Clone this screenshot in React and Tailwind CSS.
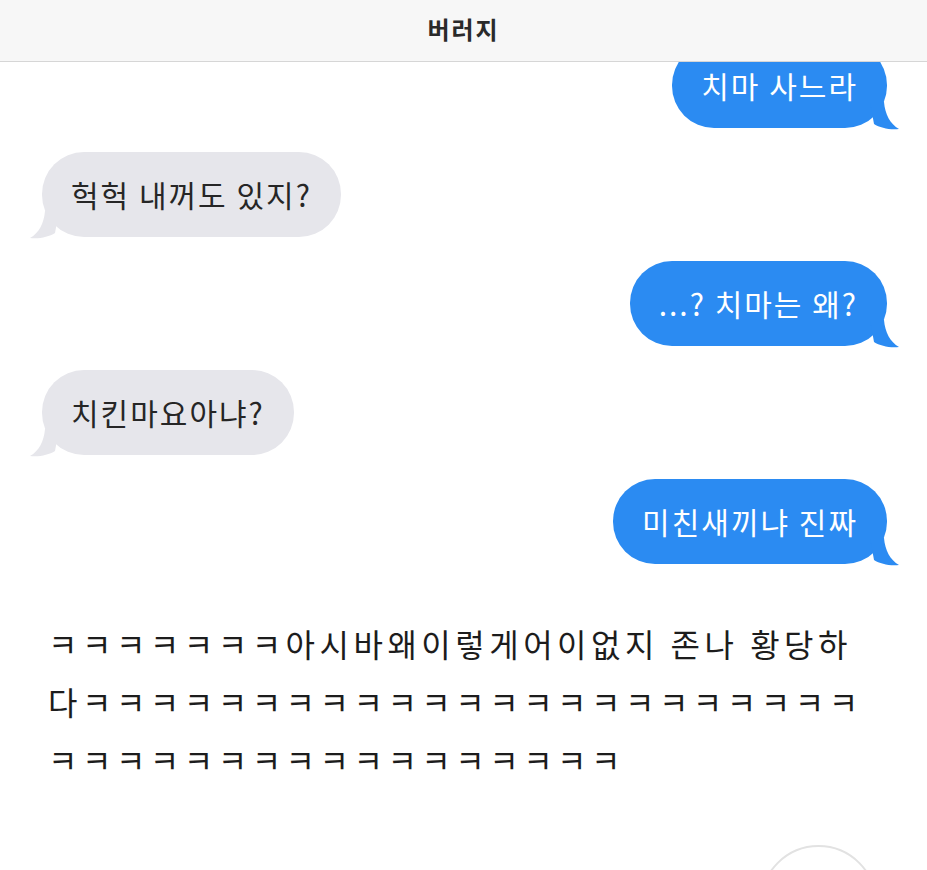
const FONT = "font-['Noto_Sans_CJK_KR','Noto_Sans',sans-serif]";

const MESSAGES = [
  { from: "me", text: "치마 사느라" },
  { from: "them", text: "헉헉 내꺼도 있지?" },
  { from: "me", text: "...? 치마는 왜?" },
  { from: "them", text: "치킨마요아냐?" },
  { from: "me", text: "미친새끼냐 진짜" },
];

function Tail({ side }) {
  const fill = side === "me" ? "#2b8bf2" : "#e6e6eb";
  if (side === "me") {
    return (
      <svg className="absolute -right-[13px] bottom-[-2px]" width="30" height="28" viewBox="0 0 30 28">
        <path d="M0 0 L14 0 C15 12 20 22 29 27 C20 28 10 26 4 22 Z" fill={fill} />
      </svg>
    );
  }
  return (
    <svg className="absolute -left-[13px] bottom-[-2px]" width="30" height="28" viewBox="0 0 30 28">
      <path d="M30 0 L16 0 C15 12 10 22 1 27 C10 28 20 26 26 22 Z" fill={fill} />
    </svg>
  );
}

function Bubble({ from, text }) {
  const me = from === "me";
  return (
    <div className={me ? "flex justify-end pr-[40px]" : "flex justify-start pl-[42px]"}>
      <div
        className={
          "relative flex h-[85px] items-center rounded-[42px] px-[29px] text-[30px] tracking-[2px] " +
          (me ? "bg-[#2b8bf2] text-white" : "bg-[#e6e6eb] text-[#262626]")
        }
      >
        <span className="relative z-10">{text}</span>
        <Tail side={from} />
      </div>
    </div>
  );
}

export default function App() {
  const k = (n) => "ㅋ".repeat(n);
  return (
    <div className={`relative h-[870px] w-[927px] overflow-hidden bg-white ${FONT}`}>
      <div className="relative z-20 flex h-[62px] items-center justify-center border-b border-[#d6d6d6] bg-[#f7f7f7]">
        <span className="-mt-[4px] text-[24px] font-semibold tracking-[2px] text-[#2a2a2a]">버러지</span>
      </div>

      <div className="-mt-[19px] flex flex-col gap-[24px]">
        {MESSAGES.map((m, i) => (
          <Bubble key={i} from={m.from} text={m.text} />
        ))}
      </div>

      <div className="mt-[50px] pl-[48px] text-[32px] leading-[58px] tracking-[4.5px] text-[#1c1c1c]">
        <div>{k(7)}아시바왜이렇게어이없지 존나 황당하</div>
        <div>다{k(23)}</div>
        <div>{k(17)}</div>
      </div>

      <div className="mt-[57px] flex justify-end pr-[50px]">
        <div className="h-[117px] w-[117px] rounded-full border-2 border-[#e2e2e2]" />
      </div>
    </div>
  );
}
